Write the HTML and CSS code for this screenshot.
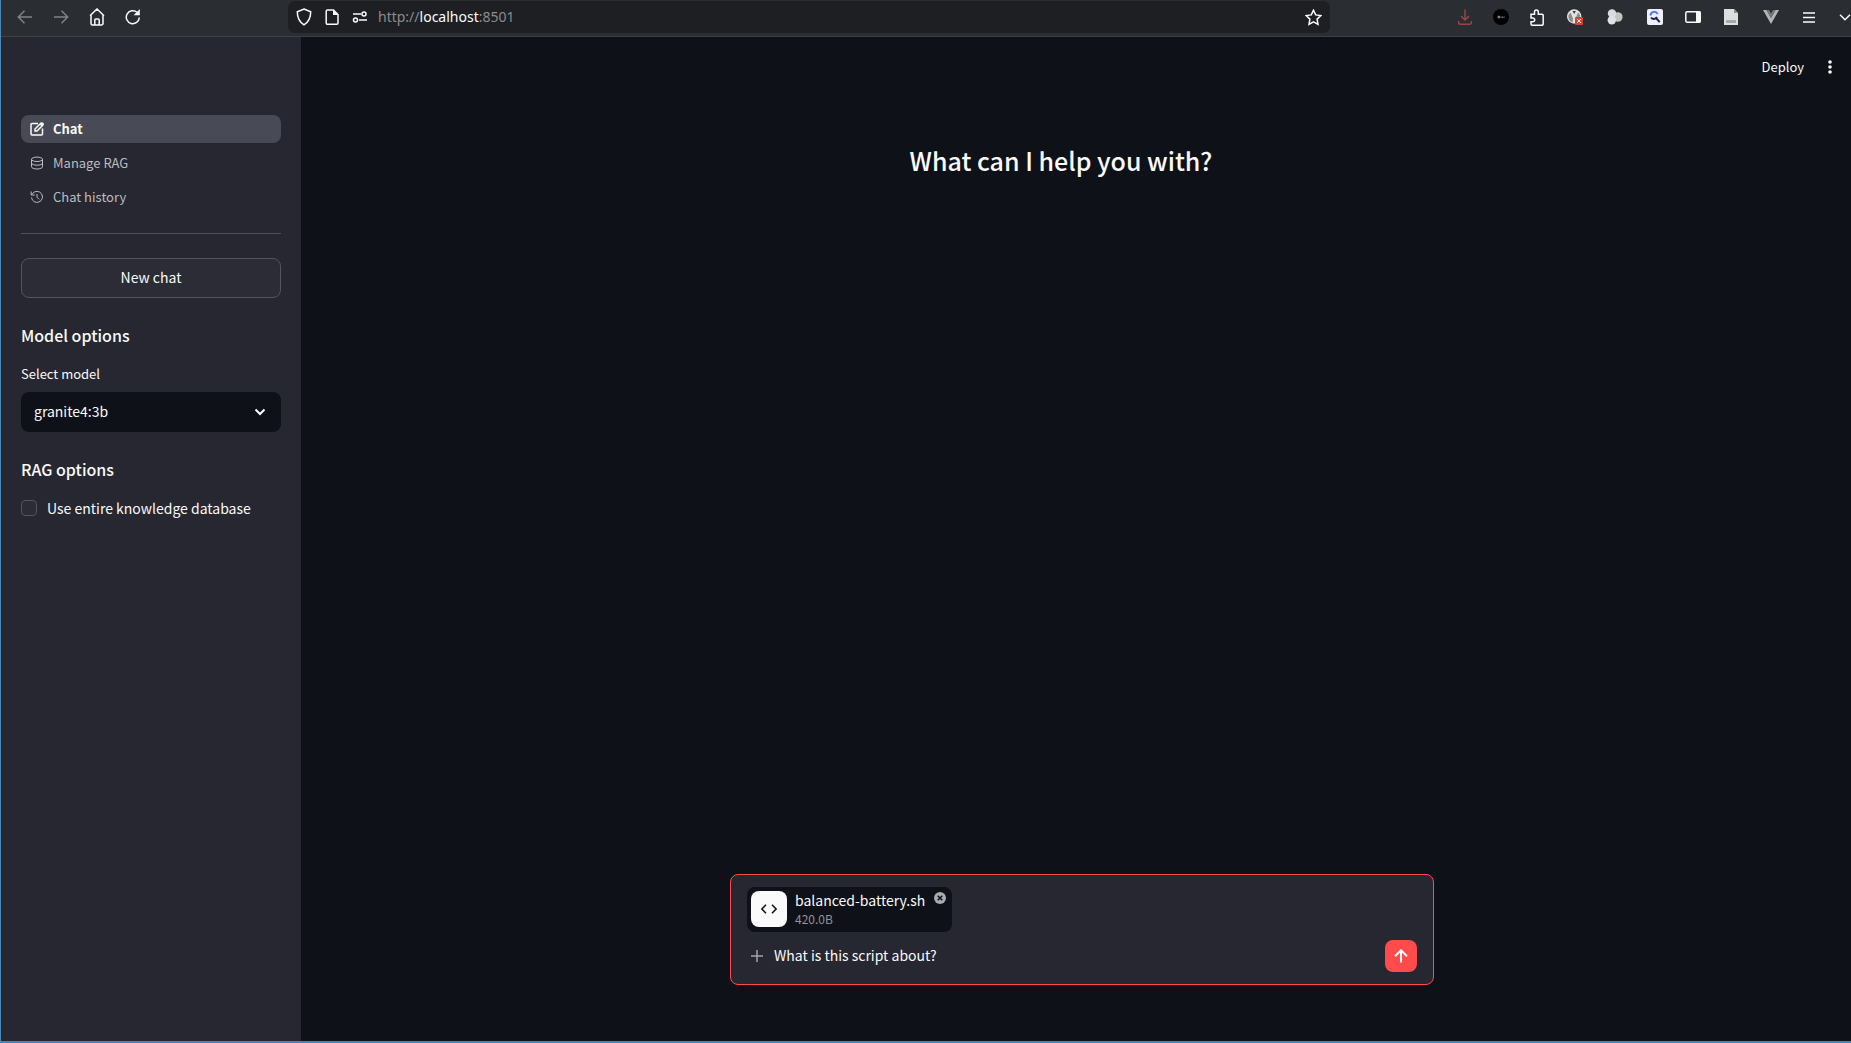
FILE: index.html
```html
<!DOCTYPE html>
<html lang="en">
<head>
<meta charset="utf-8">
<title>Chat</title>
<link rel="stylesheet" href="styles.css">
</head>
<body>
<div class="window">
  <header class="toolbar">
    <nav class="nav-buttons" aria-label="Browser navigation">
      <button class="tool dim" aria-label="Back"><svg width="16" height="16" viewBox="0 0 16 16"><path d="M15 8H1.500M7.500 1.800 1.300 8l6.200 6.200"/></svg></button>
      <button class="tool dim" aria-label="Forward"><svg width="16" height="16" viewBox="0 0 16 16"><path d="M1 8h13.500M8.500 1.800 14.700 8l-6.200 6.200"/></svg></button>
      <button class="tool" aria-label="Home"><svg class="bold" width="16" height="18" viewBox="0 0 16 18"><path d="M1 7.800 8 1l7 6.800M2 7v8.500a1.500 1.500 0 0 0 1.500 1.500h9a1.500 1.500 0 0 0 1.500-1.500V7M5.800 17v-5a1 1 0 0 1 1-1h2.400a1 1 0 0 1 1 1v5"/></svg></button>
      <button class="tool" aria-label="Reload"><svg class="bold" width="16" height="18" viewBox="0 0 16 18"><path d="M14.300 9.500A6.500 6.500 0 1 1 12 4.200"/><path class="fill" d="M14.800 1v6.200H8.600z"/></svg></button>
    </nav>
    <div class="address">
      <span class="site-icon"><svg width="16" height="18" viewBox="0 0 16 18"><path class="heavy" d="M8 1 14.700 3.700c0 6-1.700 10-6.700 13.200C3 13.700 1.300 9.700 1.300 3.700z"/></svg></span>
      <span class="site-icon"><svg width="14" height="16" viewBox="0 0 14 16"><path class="heavy" d="M2.500 1h6L13 5.500V14a1.200 1.200 0 0 1-1.200 1.200H2.500A1.200 1.200 0 0 1 1.200 14V2.200A1.200 1.200 0 0 1 2.500 1z"/><path class="fill" d="M8 1v5h5z"/></svg></span>
      <span class="site-icon"><svg width="16" height="12" viewBox="0 0 16 12"><path class="heavy" d="M1 3h8M7 9h8"/><circle class="heavy" cx="12" cy="3" r="2"/><circle class="heavy" cx="3.500" cy="9" r="2"/></svg></span>
      <span class="url">http://<b>localhost</b>:8501</span>
      <button class="star" aria-label="Bookmark"><svg class="bold" width="17" height="17" viewBox="0 0 17 17"><path d="m8.500 1.200 2.200 4.700 5.100.7-3.700 3.500.9 5.200-4.500-2.500L4 15.300l.9-5.200L1.200 6.600l5.100-.7z"/></svg></button>
    </div>
    <div class="extensions">
      <button class="tool alert" aria-label="Downloads"><svg width="14" height="16" viewBox="0 0 14 16"><path d="M7 .5v10.200M3 7l4 4 4-4M.6 12v1.500a1.800 1.800 0 0 0 1.800 1.800h9.200a1.800 1.800 0 0 0 1.800-1.800V12"/></svg></button>
      <button class="tool" aria-label="Dark extension"><svg width="16" height="16" viewBox="0 0 16 16"><circle class="black" cx="8" cy="8" r="8"/><path class="faint" d="M5 7.200v1.600h1.500V7.200zM8 7.500v1.300M9.500 8.800V7.600M11 8.800V7.600"/></svg></button>
      <button class="tool" aria-label="Extensions"><svg class="bold" width="14" height="17" viewBox="0 0 14 17"><path d="M1 5.200h3.500V3a1.900 1.900 0 0 1 3.800 0v2.200H12A1.200 1.200 0 0 1 13.200 6.400V15A1.200 1.200 0 0 1 12 16.200H2.200A1.200 1.200 0 0 1 1 15v-2.300h1.800a1.900 1.900 0 0 0 0-3.800H1z"/></svg></button>
      <button class="tool ext" aria-label="Blocker"><svg width="16" height="16" viewBox="0 0 16 16"><circle cx="7.200" cy="7.500" r="7.200" fill="#e2e2e2"/><path d="M3.500 3.500 6 9.500l-.5 4C2.500 12.500 1 9 1.500 6zM11 3.500 8.500 9.500l.5 4c3-1 4.500-4.500 4-7.500z" fill="#8b8b8b"/><path d="M5.500 2h3.400L7.200 5z" fill="#3a3d40"/><rect x="8" y="8" width="8" height="8" rx="1" fill="#d9402f"/><path d="m10 10 4 4m0-4-4 4" stroke="#fff"/></svg></button>
      <button class="tool ext" aria-label="Containers"><svg width="16" height="16" viewBox="0 0 16 16"><circle cx="10.800" cy="8" r="4.800" fill="#c4c4c4"/><circle cx="5" cy="4.500" r="4.200" fill="#dcdcdc"/><circle cx="4.800" cy="11.300" r="4.200" fill="#e2e2e2"/></svg></button>
      <button class="tool ext" aria-label="Search extension"><svg width="16" height="16" viewBox="0 0 16 16"><rect width="16" height="16" rx="2" fill="#eef0ff"/><path d="M3.500 6.500a3.800 3.800 0 0 1 7.200-1.500" stroke="#5b78f0" stroke-width="2"/><path d="M4 8.500c1.500 2 4.500 2 6-.5M9 9l3.700 4.200" stroke="#1c2648" stroke-width="2"/></svg></button>
      <button class="tool" aria-label="Sidebar"><svg class="bold" width="16" height="12" viewBox="0 0 16 12"><rect x=".8" y=".8" width="14.400" height="10.400" rx="1.500"/><path class="fill" d="M11 0h3a2 2 0 0 1 2 2v8a2 2 0 0 1-2 2h-3z"/></svg></button>
      <button class="tool ext" aria-label="Document extension"><svg width="14" height="16" viewBox="0 0 14 16"><path d="M0 0h10l4 4v12H0z" fill="#dedede"/><path d="M10 0v4h4z" fill="#8c8c8c"/><path d="M2 11h10v3H2z" fill="#a8a8a8"/></svg></button>
      <button class="tool ext" aria-label="Vue devtools"><svg width="16" height="14" viewBox="0 0 16 14"><path d="M0 0h3.500L8 8l4.500-8H16L8 14z" fill="#b5b5b5"/><path d="M3.500 0H6l2 3.500L10 0h2.500L8 8z" fill="#777"/></svg></button>
      <button class="tool" aria-label="Menu"><svg width="12" height="11" viewBox="0 0 12 11"><path class="heavy" d="M0 1h12M0 5.500h12M0 10h12"/></svg></button>
      <button class="tool" aria-label="All tabs"><svg width="12" height="7" viewBox="0 0 12 7"><path class="heavy" d="m1 .8 5 5 5-5"/></svg></button>
    </div>
  </header>

  <div class="app">
    <aside class="sidebar">
      <nav class="pages" aria-label="Pages">
        <a class="page active" href="#chat"><svg width="14" height="14" viewBox="0 0 14 14"><path d="M8 1.500H2A1 1 0 0 0 1 2.500V12a1 1 0 0 0 1 1h9.500a1 1 0 0 0 1-1V6.500M5 9V7l5.500-5.500a1 1 0 0 1 1.400 0l.6.600a1 1 0 0 1 0 1.400L7 9z"/><path class="fill" d="m9.500 2.200 1.800-1.700a1 1 0 0 1 1.400 0l.8.800a1 1 0 0 1 0 1.400l-1.700 1.800z"/></svg>Chat</a>
        <a class="page" href="#rag"><svg width="14" height="14" viewBox="0 0 14 14"><ellipse cx="7" cy="3.300" rx="5.500" ry="2.200"/><path d="M1.500 3.300v7.500c0 1.200 2.500 2.200 5.500 2.200s5.500-1 5.500-2.200V3.300M1.500 7c0 1.200 2.500 2.200 5.500 2.200S12.500 8.200 12.500 7"/></svg>Manage RAG</a>
        <a class="page" href="#history"><svg width="14" height="14" viewBox="0 0 14 14"><path d="M1.500 7.500a5.500 5.500 0 1 0 1.300-4.200L1.200 5M1.200 1.500V5h3.500M7 4v3.200l2.200 2.200"/></svg>Chat history</a>
      </nav>
      <hr>
      <button class="new-chat">New chat</button>
      <h2>Model options</h2>
      <label class="field-label" for="model">Select model</label>
      <div class="select">
        <select id="model"><option>granite4:3b</option></select>
        <svg width="12" height="8" viewBox="0 0 12 8"><path d="m1.500 1.500 4.500 4.500 4.500-4.500"/></svg>
      </div>
      <h2>RAG options</h2>
      <label class="check"><input type="checkbox">Use entire knowledge database</label>
    </aside>

    <main>
      <div class="actions">
        <button class="deploy">Deploy</button>
        <button class="kebab" aria-label="More"><svg width="4" height="14" viewBox="0 0 4 14"><circle cx="2" cy="2" r="1.800"/><circle cx="2" cy="7" r="1.800"/><circle cx="2" cy="12" r="1.800"/></svg></button>
      </div>
      <h1>What can I help you with?</h1>
      <form class="composer">
        <div class="file">
          <span class="file-icon"><svg width="16" height="10" viewBox="0 0 16 10"><path d="M5 .8.9 5 5 9.200M11 .8 15.100 5 11 9.200"/></svg></span>
          <span class="file-info"><span class="file-name">balanced-battery.sh</span><span class="file-size">420.0B</span></span>
          <button type="button" class="remove" aria-label="Remove file"><svg width="12" height="12" viewBox="0 0 12 12"><circle cx="6" cy="6" r="6"/><path d="m3.700 3.700 4.600 4.600m0-4.600L3.700 8.300"/></svg></button>
        </div>
        <div class="entry">
          <button type="button" class="attach" aria-label="Attach"><svg width="12" height="12" viewBox="0 0 12 12"><path d="M6 0v12M0 6h12"/></svg></button>
          <input type="text" aria-label="Message" value="What is this script about?">
          <button type="button" class="send" aria-label="Send"><svg width="14" height="14" viewBox="0 0 14 14"><path d="M7 13.500V2M1 7.300l6-6 6 6"/></svg></button>
        </div>
      </form>
    </main>
  </div>
</div>
</body>
</html>
```
FILE: styles.css
```css
* { box-sizing: border-box; }

body {
  margin: 0;
  overflow: hidden;
  background: #0e1117;
  color: #fafafa;
  font: 14px/24px "Noto Sans CJK SC", "Noto Sans", sans-serif;
}

button, input, select {
  margin: 0;
  padding: 0;
  border: 0;
  background: none;
  color: inherit;
  font: inherit;
}

svg { flex: none; fill: none; stroke: currentColor; }

/* The window runs slightly past the right edge of the screen. */
.window {
  display: flex;
  flex-direction: column;
  width: calc(100% + 12px);
  min-height: 100vh;
  border-left: 1px solid #4c87b8;
  border-bottom: 2px solid #4c83b0;
}

/* Browser toolbar */
.toolbar {
  display: flex;
  align-items: flex-start;
  height: 37px;
  padding-left: 6px;
  border-bottom: 1px solid #3e4143;
  background: #2a2d31;
  color: #fbfbfe;
}
.nav-buttons, .extensions { display: flex; }
.tool {
  display: flex;
  align-items: center;
  justify-content: center;
  width: 36px;
  height: 34px;
}
.tool.ext { width: 40px; }
.dim { color: #808284; }
.dim svg, .alert svg { stroke-width: 1.5; }
.alert { color: #94483f; }
.bold, .heavy { stroke-width: 1.5; }
.fill { fill: currentColor; stroke: none; }
.black { fill: #000; stroke: none; }
.faint { stroke: #999; }
.ext svg { stroke: none; }
.address {
  display: flex;
  flex: 1;
  align-items: center;
  height: 32px;
  margin: 1px 117px 0 137px;
  padding: 0 8px 0 2px;
  border-radius: 7px;
  background: #1d1f22;
}
.site-icon {
  display: flex;
  justify-content: center;
  width: 28px;
}
.url {
  flex: 1;
  margin-left: 4px;
  color: #8b8c8e;
  font: 14px/24px "Noto Sans", sans-serif;
}
.url b { color: #fbfbfe; font-weight: 400; }
.star { display: flex; }

/* App */
.app { display: flex; flex: 1; }
.sidebar {
  width: 300px;
  padding: 78px 20px 20px;
  background: #262730;
}
.pages { display: flex; flex-direction: column; gap: 6px; }
.page {
  display: flex;
  align-items: center;
  gap: 9px;
  height: 28px;
  padding: 0 9px;
  border-radius: 8px;
  color: #bcbdc1;
  font-size: 13px;
  text-decoration: none;
}
.page.active { background: #484a55; color: #fafafa; font-weight: 600; }
.page.active svg { stroke-width: 1.5; }
hr {
  height: 1px;
  margin: 22px 0 24px;
  border: 0;
  background: #515259;
}
.new-chat {
  width: 100%;
  height: 40px;
  padding-bottom: 2px;
  border: 1px solid #53545c;
  border-radius: 8px;
  background: #2b2c36;
}
h2 {
  margin: 25px 0 15px;
  font-size: 16px;
  font-weight: 500;
  line-height: 24px;
}
.field-label { display: block; margin-bottom: 6px; font-size: 13px; }
.select {
  display: flex;
  align-items: center;
  height: 40px;
  padding: 0 15px 0 13px;
  border-radius: 8px;
  background: #0e1117;
}
.select select { flex: 1; padding-bottom: 2px; appearance: none; }
.select svg { stroke-width: 2; }
.check { display: flex; align-items: center; gap: 10px; }
.check input {
  width: 16px;
  height: 16px;
  border: 1px solid #53545c;
  border-radius: 4px;
  background: #2b2c36;
  appearance: none;
}

main { display: flex; flex: 1; flex-direction: column; }
.actions {
  display: flex;
  align-items: center;
  justify-content: flex-end;
  gap: 24px;
  height: 60px;
  padding-right: 31px;
}
.deploy { font-size: 13px; }
.kebab { display: flex; }
.kebab circle { fill: currentColor; stroke: none; }
h1 {
  margin: 43px 42px 0 0;
  font-size: 25px;
  font-weight: 500;
  line-height: 40px;
  text-align: center;
}
.composer {
  width: 704px;
  max-width: 90%;
  margin: auto auto 56px;
  padding: 12px 16px;
  border: 1px solid #ff4b4b;
  border-radius: 8px;
  background: #262730;
}
.file {
  display: flex;
  align-items: flex-start;
  width: fit-content;
  height: 45px;
  padding: 4px 6px 4px 4px;
  border-radius: 8px;
  background: #0e1117;
}
.file-icon {
  display: flex;
  align-items: center;
  justify-content: center;
  width: 36px;
  height: 36px;
  border-radius: 8px;
  background: #fafafa;
  color: #0e1117;
}
.file-icon svg { stroke-width: 1.5; }
.file-info { display: flex; flex-direction: column; margin: 0 9px 0 8px; }
.file-name { line-height: 18px; }
.file-size { color: #929397; font-size: 12px; line-height: 19px; }
.remove { display: flex; margin-top: 1px; }
.remove circle { fill: #aaabad; stroke: none; }
.remove path { stroke: #0e1117; stroke-width: 1.5; }
.entry { display: flex; align-items: center; margin-top: 8px; }
.attach { display: flex; margin: 0 11px 0 4px; color: #a3a4a8; }
.attach svg { stroke-width: 1.5; }
.entry input { flex: 1; height: 24px; padding-bottom: 2px; outline: 0; }
.send {
  display: flex;
  align-items: center;
  justify-content: center;
  width: 32px;
  height: 32px;
  border-radius: 8px;
  background: #ff4b4b;
}
.send svg { stroke-width: 2; }
```
